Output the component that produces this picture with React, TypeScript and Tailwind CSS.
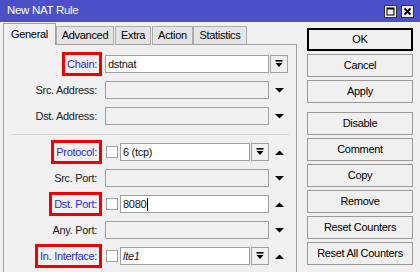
import React from 'react';

type Side = 'drop' | 'up' | 'down';

type Row = {
  label: string;
  marked?: boolean;
  check?: boolean;
  value?: string;
  enabled?: boolean;
  italic?: boolean;
  caret?: boolean;
  innerDrop?: boolean;
  side: Side;
};

const TOP_ROWS: Row[] = [
  { label: 'Chain:', marked: true, value: 'dstnat', enabled: true, side: 'drop' },
  { label: 'Src. Address:', side: 'down' },
  { label: 'Dst. Address:', side: 'down' },
];

const BOTTOM_ROWS: Row[] = [
  { label: 'Protocol:', marked: true, check: true, value: '6 (tcp)', enabled: true, innerDrop: true, side: 'up' },
  { label: 'Src. Port:', side: 'down' },
  { label: 'Dst. Port:', marked: true, check: true, value: '8080', enabled: true, caret: true, side: 'up' },
  { label: 'Any. Port:', side: 'down' },
  { label: 'In. Interface:', marked: true, check: true, value: 'lte1', enabled: true, italic: true, innerDrop: true, side: 'up' },
];

const TABS = [
  { name: 'General', w: 'w-[53px]', ml: 'ml-0' },
  { name: 'Advanced', w: 'w-[58px]', ml: 'ml-0' },
  { name: 'Extra', w: 'w-[36px]', ml: 'ml-[1px]' },
  { name: 'Action', w: 'w-[41px]', ml: 'ml-[1px]' },
  { name: 'Statistics', w: 'w-[54px]', ml: 'ml-0' },
];

const BUTTONS = ['OK', 'Cancel', 'Apply', 'Disable', 'Comment', 'Copy', 'Remove', 'Reset Counters', 'Reset All Counters'];

function DropIcon() {
  return (
    <svg width="8" height="8" viewBox="0 0 8 8">
      <rect x="0.5" y="0" width="7" height="1.6" fill="#000" />
      <polygon points="0.5,3 7.5,3 4,7" fill="#000" />
    </svg>
  );
}

function Arrow({ up }: { up?: boolean }) {
  return (
    <svg width="9" height="5" viewBox="0 0 9 5">
      <polygon points={up ? '0,5 9,5 4.5,0.5' : '0,0 9,0 4.5,4.5'} fill="#000" />
    </svg>
  );
}

function DropButton() {
  return (
    <div className="w-[18px] h-[18px] shrink-0 border border-[#a0a0a0] bg-[#f0f0f0] flex items-center justify-center">
      <DropIcon />
    </div>
  );
}

function FormRow({ row }: { row: Row }) {
  return (
    <div className="flex items-center h-[26px]">
      {/* label column, ends at x=101 */}
      <div className="w-[98px] flex justify-end">
        <span
          className={
            'h-[24px] flex items-center border-[3px] px-[2px] ' +
            (row.marked ? 'border-[#f00000] text-[#2b2be0]' : 'border-transparent text-[#222]')
          }
        >
          {row.label}
        </span>
      </div>

      <div className="ml-[3px] w-[164px] flex items-center">
        {row.check && <div className="ml-[1px] mr-[2px] w-[12px] h-[12px] shrink-0 border border-[#a0a0a0] bg-white" />}
        <div
          className={
            'flex-1 h-[18px] border border-[#a0a0a0] flex items-center pl-[2px] ' +
            (row.enabled ? 'bg-white' : 'bg-[#f0f0f0]')
          }
        >
          {row.value && <span className={row.italic ? 'italic' : ''}>{row.value}</span>}
          {row.caret && <span className="ml-[1px] w-px h-[13px] bg-black" />}
        </div>
        {row.innerDrop && (
          <div className="ml-[1px]">
            <DropButton />
          </div>
        )}
      </div>

      <div className="ml-[1px] w-[18px] flex items-center justify-center">
        {row.side === 'drop' ? <DropButton /> : <Arrow up={row.side === 'up'} />}
      </div>
    </div>
  );
}

export default function App() {
  return (
    <div className="w-[420px] h-[272px] overflow-hidden bg-[#f0f0f0] font-['Liberation_Sans',sans-serif] text-[11px] tracking-[-0.3px] text-[#111] select-none">
      {/* Title bar */}
      <div className="h-[22px] bg-[#4b4fc8] flex items-center justify-between">
        <span className="ml-[7px] text-white text-[11.5px]">New NAT Rule</span>
        <div className="flex gap-[4px] mr-[6px]">
          <div className="w-[13px] h-[13px] border border-[#333] bg-[#ececec] flex items-center justify-center">
            <svg width="9" height="9" viewBox="0 0 9 9">
              <rect x="1" y="1" width="7" height="7" fill="none" stroke="#000" strokeWidth="1" />
              <rect x="1" y="1" width="7" height="1.5" fill="#000" />
            </svg>
          </div>
          <div className="w-[13px] h-[13px] border border-[#333] bg-[#ececec] flex items-center justify-center">
            <svg width="9" height="9" viewBox="0 0 9 9">
              <path d="M1.5 1.5 L7.5 7.5 M7.5 1.5 L1.5 7.5" stroke="#000" strokeWidth="1.8" />
            </svg>
          </div>
        </div>
      </div>

      <div className="flex">
        {/* Tabs + General panel */}
        <div className="ml-[3px] w-[294px] flex flex-col">
          <div className="h-[23px] flex items-end">
            {TABS.map((t, i) =>
              i === 0 ? (
                <div
                  key={t.name}
                  className={`${t.w} h-[22px] border-x border-t border-[#a0a0a0] bg-[#f0f0f0] flex items-center justify-center text-black`}
                >
                  {t.name}
                </div>
              ) : (
                <div
                  key={t.name}
                  className={`${t.w} ${t.ml} h-[19px] border border-[#adadad] border-b-[#a0a0a0] bg-[#e4e4e4] flex items-center justify-center text-black`}
                >
                  {t.name}
                </div>
              ),
            )}
            <div className="flex-1 h-px bg-[#a0a0a0]" />
          </div>

          <div className="h-[240px] border-x border-[#a0a0a0] pt-[6px]">
            {TOP_ROWS.map((r) => (
              <FormRow key={r.label} row={r} />
            ))}
            <div className="h-[10px] flex items-center">
              <div className="ml-[8px] mr-[7px] flex-1 h-px bg-[#d6d6d6]" />
            </div>
            {BOTTOM_ROWS.map((r) => (
              <FormRow key={r.label} row={r} />
            ))}
          </div>
        </div>

        {/* Action buttons */}
        <div className="ml-[10px] w-[106px] pt-[6px] flex flex-col gap-[3px]">
          {BUTTONS.map((b) => (
            <div
              key={b}
              className={
                'h-[23px] flex items-center justify-center text-black bg-[#f0f0f0] ' +
                (b === 'OK' ? 'border-2 border-black' : 'border border-[#9a9a9a]') +
                (b === 'Disable' ? ' mt-[6px]' : '')
              }
            >
              {b}
            </div>
          ))}
        </div>
      </div>
    </div>
  );
}
